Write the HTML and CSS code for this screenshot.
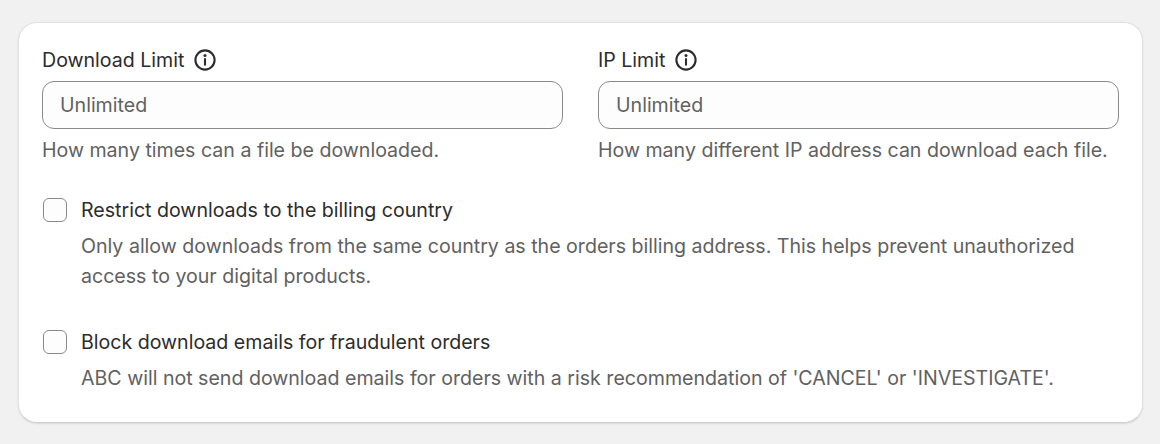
FILE: index.html
```html
<!DOCTYPE html>
<html lang="en">
<head>
    <meta charset="UTF-8">
    <title>Download Settings</title>
    <link rel="stylesheet" href="styles.css">
</head>
<body>
    <div class="card">
        <div class="field-row">
            <div class="field">
                <div class="field-label">
                    <label for="downloadLimit">Download Limit</label>
                    <svg class="info-icon" viewBox="0 0 22 22" aria-hidden="true">
                        <circle cx="11" cy="11" r="9.6"></circle>
                        <line x1="11" y1="10" x2="11" y2="15.8"></line>
                        <circle class="info-dot" cx="11" cy="6.6" r="1.5"></circle>
                    </svg>
                </div>
                <input class="text-input" id="downloadLimit" type="text" placeholder="Unlimited">
                <p class="help-text">How many times can a file be downloaded.</p>
            </div>
            <div class="field">
                <div class="field-label">
                    <label for="ipLimit">IP Limit</label>
                    <svg class="info-icon" viewBox="0 0 22 22" aria-hidden="true">
                        <circle cx="11" cy="11" r="9.6"></circle>
                        <line x1="11" y1="10" x2="11" y2="15.8"></line>
                        <circle class="info-dot" cx="11" cy="6.6" r="1.5"></circle>
                    </svg>
                </div>
                <input class="text-input" id="ipLimit" type="text" placeholder="Unlimited">
                <p class="help-text">How many different IP address can download each file.</p>
            </div>
        </div>

        <div class="check-list">
            <div class="check-item">
                <input class="checkbox" id="restrictCountry" type="checkbox">
                <div class="check-body">
                    <label class="check-label" for="restrictCountry">Restrict downloads to the billing country</label>
                    <p class="check-help">Only allow downloads from the same country as the orders billing address. This helps prevent unauthorized access to your digital products.</p>
                </div>
            </div>
            <div class="check-item">
                <input class="checkbox" id="blockEmails" type="checkbox">
                <div class="check-body">
                    <label class="check-label" for="blockEmails">Block download emails for fraudulent orders</label>
                    <p class="check-help">ABC will not send download emails for orders with a risk recommendation of 'CANCEL' or 'INVESTIGATE'.</p>
                </div>
            </div>
        </div>
    </div>
</body>
</html>
```

FILE: styles.css
```css
* {
    margin: 0;
    padding: 0;
    box-sizing: border-box;
}

html, body {
    height: 100%;
    overflow: hidden;
}

body {
    font-family: 'Inter', 'Liberation Sans', sans-serif;
    font-size: 19.58px;
    line-height: 30px;
    background: #f1f1f1;
    color: #2c2c2c;
    padding: 22px 17px 21px 18px;
}

.card {
    height: 401px;
    padding: 22px 23px 0;
    background: #ffffff;
    border: 1px solid #e0e0e0;
    border-bottom-color: #cfcfcf;
    border-radius: 19px;
    box-shadow: 0 1px 2px rgba(0,0,0,0.1);
}

.field-row {
    display: grid;
    grid-template-columns: 520.5px 520.5px;
    gap: 35.5px;
}

.field-label {
    display: flex;
    align-items: center;
    gap: 10px;
    height: 30px;
    margin-bottom: 6px;
}

.info-icon {
    width: 22px;
    height: 22px;
    fill: none;
    stroke: #2c2c2c;
    stroke-width: 2.1;
    stroke-linecap: round;
}

.info-dot {
    fill: #2c2c2c;
    stroke: none;
}

.text-input {
    display: block;
    width: 100%;
    height: 48px;
    padding: 0 17px;
    font: inherit;
    color: #2c2c2c;
    background: #fdfdfd;
    border: 1px solid #8a8a8a;
    border-radius: 12px;
}

.text-input::placeholder {
    color: #616161;
    opacity: 1;
}

.help-text {
    margin-top: 6px;
    color: #616161;
}

.check-list {
    display: flex;
    flex-direction: column;
    gap: 36px;
    margin-top: 30px;
}

.check-item {
    display: flex;
    gap: 14px;
}

.checkbox {
    appearance: none;
    flex: none;
    width: 24px;
    height: 24px;
    margin: 3px 0 0 1px;
    background: #fdfdfd;
    border: 1px solid #8a8a8a;
    border-radius: 6px;
}

.check-label {
    display: block;
    margin-bottom: 6px;
}

.check-help {
    color: #616161;
}
```
